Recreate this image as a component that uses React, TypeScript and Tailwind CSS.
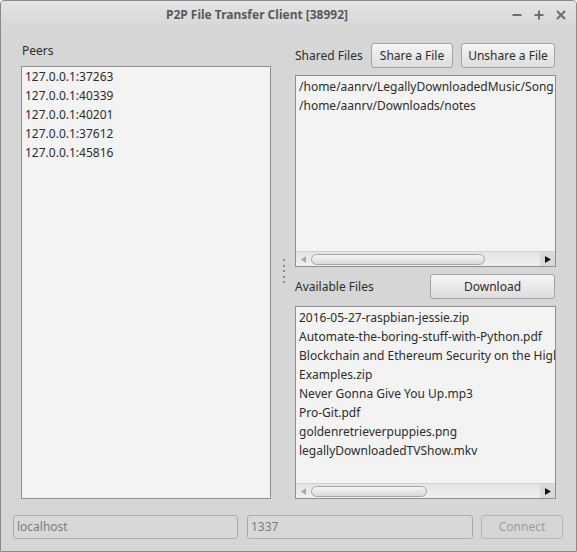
import React from "react";

const font = { fontFamily: '"Noto Sans", "Open Sans", sans-serif' };

function HScroll({ thumbW }: { thumbW: number }) {
  return (
    <div className="absolute left-0 right-0 bottom-0 h-[15px] flex items-center bg-gradient-to-b from-[#e4e4e4] to-[#f0f0f0] border-t border-[#d0d0d0]">
      <div className="w-[14px] h-full flex items-center justify-center">
        <svg width="5" height="7" viewBox="0 0 5 7">
          <path d="M5 0 L0 3.5 L5 7 Z" fill="#a8a8a8" />
        </svg>
      </div>
      <div className="flex-1 h-full flex items-center pl-[1px]">
        <div
          className="h-[11px] rounded-full border border-[#a6a6a6] bg-gradient-to-b from-[#f4f4f4] to-[#dadada]"
          style={{ width: thumbW }}
        />
      </div>
      <div className="w-[15px] h-full flex items-center justify-center bg-[#d9d9d9]">
        <svg width="6" height="7" viewBox="0 0 6 7">
          <path d="M0 0 L6 3.5 L0 7 Z" fill="#111" />
        </svg>
      </div>
    </div>
  );
}

function List({ items, scroll, thumbW = 0, className = "", pad = "pt-[1px]" }: { items: string[]; scroll?: boolean; thumbW?: number; className?: string; pad?: string }) {
  return (
    <div className={"relative border border-[#8e8e8e] bg-[#f3f3f3] overflow-hidden " + className}>
      <div className={pad + " pl-[3px]"}>
        {items.map((t) => (
          <div key={t} className="h-[19px] leading-[19px] text-[12px] text-[#2c2c2c] whitespace-nowrap">
            {t}
          </div>
        ))}
      </div>
      {scroll && <HScroll thumbW={thumbW} />}
    </div>
  );
}

function Button({ children, className = "", disabled }: { children: React.ReactNode; className?: string; disabled?: boolean }) {
  return (
    <div
      className={
        "flex items-center justify-center rounded-[3px] border text-[12px] " +
        (disabled
          ? "border-[#b4b4b4] bg-[#d6d6d6] text-[#9c9c9c] "
          : "border-[#a3a3a3] bg-gradient-to-b from-[#f5f5f5] to-[#dddddd] text-[#2c2c2c] ") +
        className
      }
    >
      {children}
    </div>
  );
}

export default function App() {
  return (
    <div style={font} className="w-[577px] h-[552px] bg-white">
      <div className="w-[577px] h-[552px] border border-[#8a8a8a] rounded-t-[4px] bg-[#d6d6d6] flex flex-col overflow-hidden">
        {/* title bar */}
        <div className="h-[28px] flex items-center bg-gradient-to-b from-[#e4e4e4] to-[#d6d6d6]">
          <div className="flex-1 text-center text-[12px] font-bold text-[#5a5a5a] pl-[1px]">
            P2P File Transfer Client [38992]
          </div>
          <div className="w-[64px] flex items-center gap-[12px] pb-[1px]">
            <svg width="10" height="10" viewBox="0 0 10 10">
              <path d="M0.5 5 H9.5" stroke="#6e6e6e" strokeWidth="2" />
            </svg>
            <svg width="10" height="10" viewBox="0 0 10 10">
              <path d="M0.5 5 H9.5 M5 0.5 V9.5" stroke="#6e6e6e" strokeWidth="2" />
            </svg>
            <svg width="10" height="10" viewBox="0 0 10 10">
              <path d="M1 1 L9 9 M9 1 L1 9" stroke="#6e6e6e" strokeWidth="2" />
            </svg>
          </div>
        </div>

        {/* content */}
        <div className="flex-1 flex flex-col px-[12px] pt-[14px] pb-[12px]">
          <div className="h-[456px] flex px-[8px]">
            {/* left */}
            <div className="w-[250px] flex flex-col">
              <div className="h-[16px] leading-[16px] text-[12px] text-[#2c2c2c] pl-[1px]">Peers</div>
              <List
                className="mt-[7px] h-[433px]"
                pad="pt-0"
                items={["127.0.0.1:37263", "127.0.0.1:40339", "127.0.0.1:40201", "127.0.0.1:37612", "127.0.0.1:45816"]}
              />
            </div>
            {/* splitter */}
            <div className="w-[24px] flex items-center justify-center">
              <div className="flex flex-col gap-[3.5px] pl-[1px]">
                {[0, 1, 2, 3, 4].map((i) => (
                  <div key={i} className="w-[2px] h-[2px] bg-[#8a8a8a]" />
                ))}
              </div>
            </div>
            {/* right */}
            <div className="w-[261px] flex flex-col">
              <div className="h-[25px] flex items-center gap-[8px]">
                <div className="flex-1 text-[12px] text-[#2c2c2c]">Shared Files</div>
                <Button className="w-[82px] h-[25px]">Share a File</Button>
                <Button className="w-[94px] h-[25px] mr-[1px]">Unshare a File</Button>
              </div>
              <List
                className="mt-[7px] h-[192px]"
                pad="pt-[1px]"
                scroll
                thumbW={174}
                items={["/home/aanrv/LegallyDownloadedMusic/Song", "/home/aanrv/Downloads/notes"]}
              />
              <div className="mt-[7px] h-[25px] flex items-center">
                <div className="flex-1 text-[12px] text-[#2c2c2c]">Available Files</div>
                <Button className="w-[125px] h-[25px] mr-[1px]">Download</Button>
              </div>
              <List
                className="mt-[7px] h-[193px]"
                pad="pt-[1px]"
                scroll
                thumbW={116}
                items={[
                  "2016-05-27-raspbian-jessie.zip",
                  "Automate-the-boring-stuff-with-Python.pdf",
                  "Blockchain and Ethereum Security on the Highway",
                  "Examples.zip",
                  "Never Gonna Give You Up.mp3",
                  "Pro-Git.pdf",
                  "goldenretrieverpuppies.png",
                  "legallyDownloadedTVShow.mkv",
                ]}
              />
            </div>
          </div>

          {/* bottom row */}
          <div className="mt-[16px] h-[24px] flex">
            <div className="w-[225px] h-full rounded-[3px] border border-[#acacac] bg-[#d8d8d8] flex items-center pl-[3px] text-[12px] text-[#7c7c7c]">
              localhost
            </div>
            <div className="ml-[9px] w-[226px] h-full rounded-[3px] border border-[#acacac] bg-[#d8d8d8] flex items-center pl-[3px] text-[12px] text-[#7c7c7c]">
              1337
            </div>
            <Button disabled className="ml-[8px] w-[82px] h-full">
              Connect
            </Button>
          </div>
        </div>
      </div>
    </div>
  );
}
